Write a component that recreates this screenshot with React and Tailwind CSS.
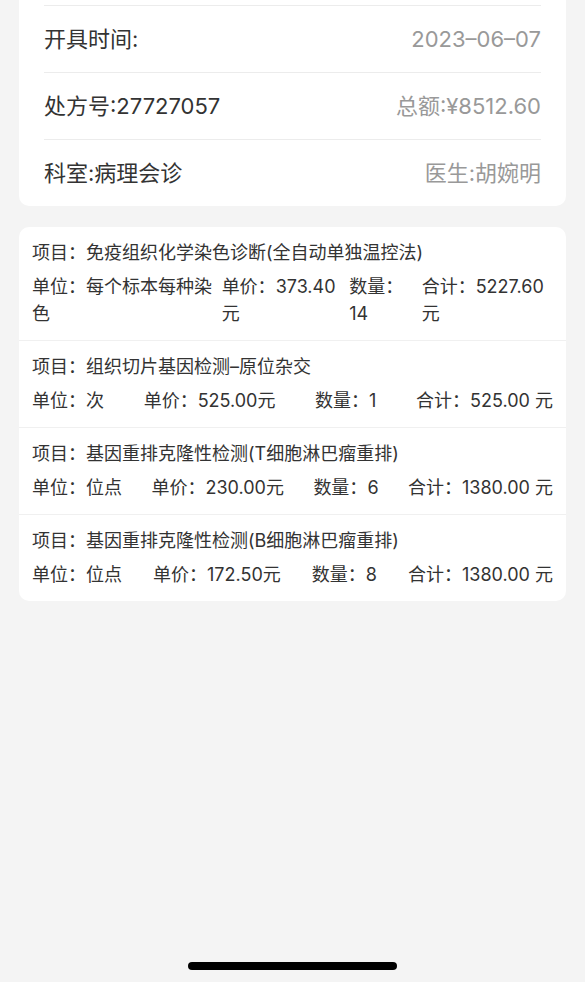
const info = [
    { left: '开具时间:', right: '2023–06–07' },
    { left: '处方号:27727057', right: '总额:¥8512.60' },
    { left: '科室:病理会诊', right: '医生:胡婉明' },
];

const items = [
    { name: '免疫组织化学染色诊断(全自动单独温控法)', unit: '每个标本每种染色', price: '373.40元', qty: '14', total: '5227.60元' },
    { name: '组织切片基因检测–原位杂交', unit: '次', price: '525.00元', qty: '1', total: '525.00 元' },
    { name: '基因重排克隆性检测(T细胞淋巴瘤重排)', unit: '位点', price: '230.00元', qty: '6', total: '1380.00 元' },
    { name: '基因重排克隆性检测(B细胞淋巴瘤重排)', unit: '位点', price: '172.50元', qty: '8', total: '1380.00 元' },
];

export default function App() {
    return (
        <div
            className="relative min-h-[982px] w-full bg-[#f4f4f4] px-[19px]"
            style={{ fontFamily: 'Inter, "Noto Sans CJK SC", sans-serif' }}
        >
            {/* Prescription summary */}
            <div className="bg-white rounded-b-[10px] px-[25px] pt-[5px]">
                {info.map((row) => (
                    <div key={row.left} className="flex h-[67px] items-center justify-between border-t border-[#ececec] text-[22px]">
                        <span className="text-[#333]">{row.left}</span>
                        <span className="text-[#999]">{row.right}</span>
                    </div>
                ))}
            </div>

            {/* Fee items */}
            <div className="mt-[21px] bg-white rounded-[10px]">
                {items.map((it, i) => (
                    <div
                        key={i}
                        className={`flex flex-col gap-[7px] px-[13px] pt-[12px] pb-[13px] text-[18px] leading-[27px] text-[#333] ${i > 0 ? 'border-t border-[#f0f0f0]' : ''}`}
                    >
                        <div>项目：{it.name}</div>
                        <div className="flex justify-between gap-[4px]">
                            <span>单位：{it.unit}</span>
                            <span>单价：{it.price}</span>
                            <span>数量：{it.qty}</span>
                            <span>合计：{it.total}</span>
                        </div>
                    </div>
                ))}
            </div>

            {/* Home indicator */}
            <div className="absolute left-[188px] top-[962px] h-[8px] w-[209px] rounded-full bg-black" />
        </div>
    );
}
